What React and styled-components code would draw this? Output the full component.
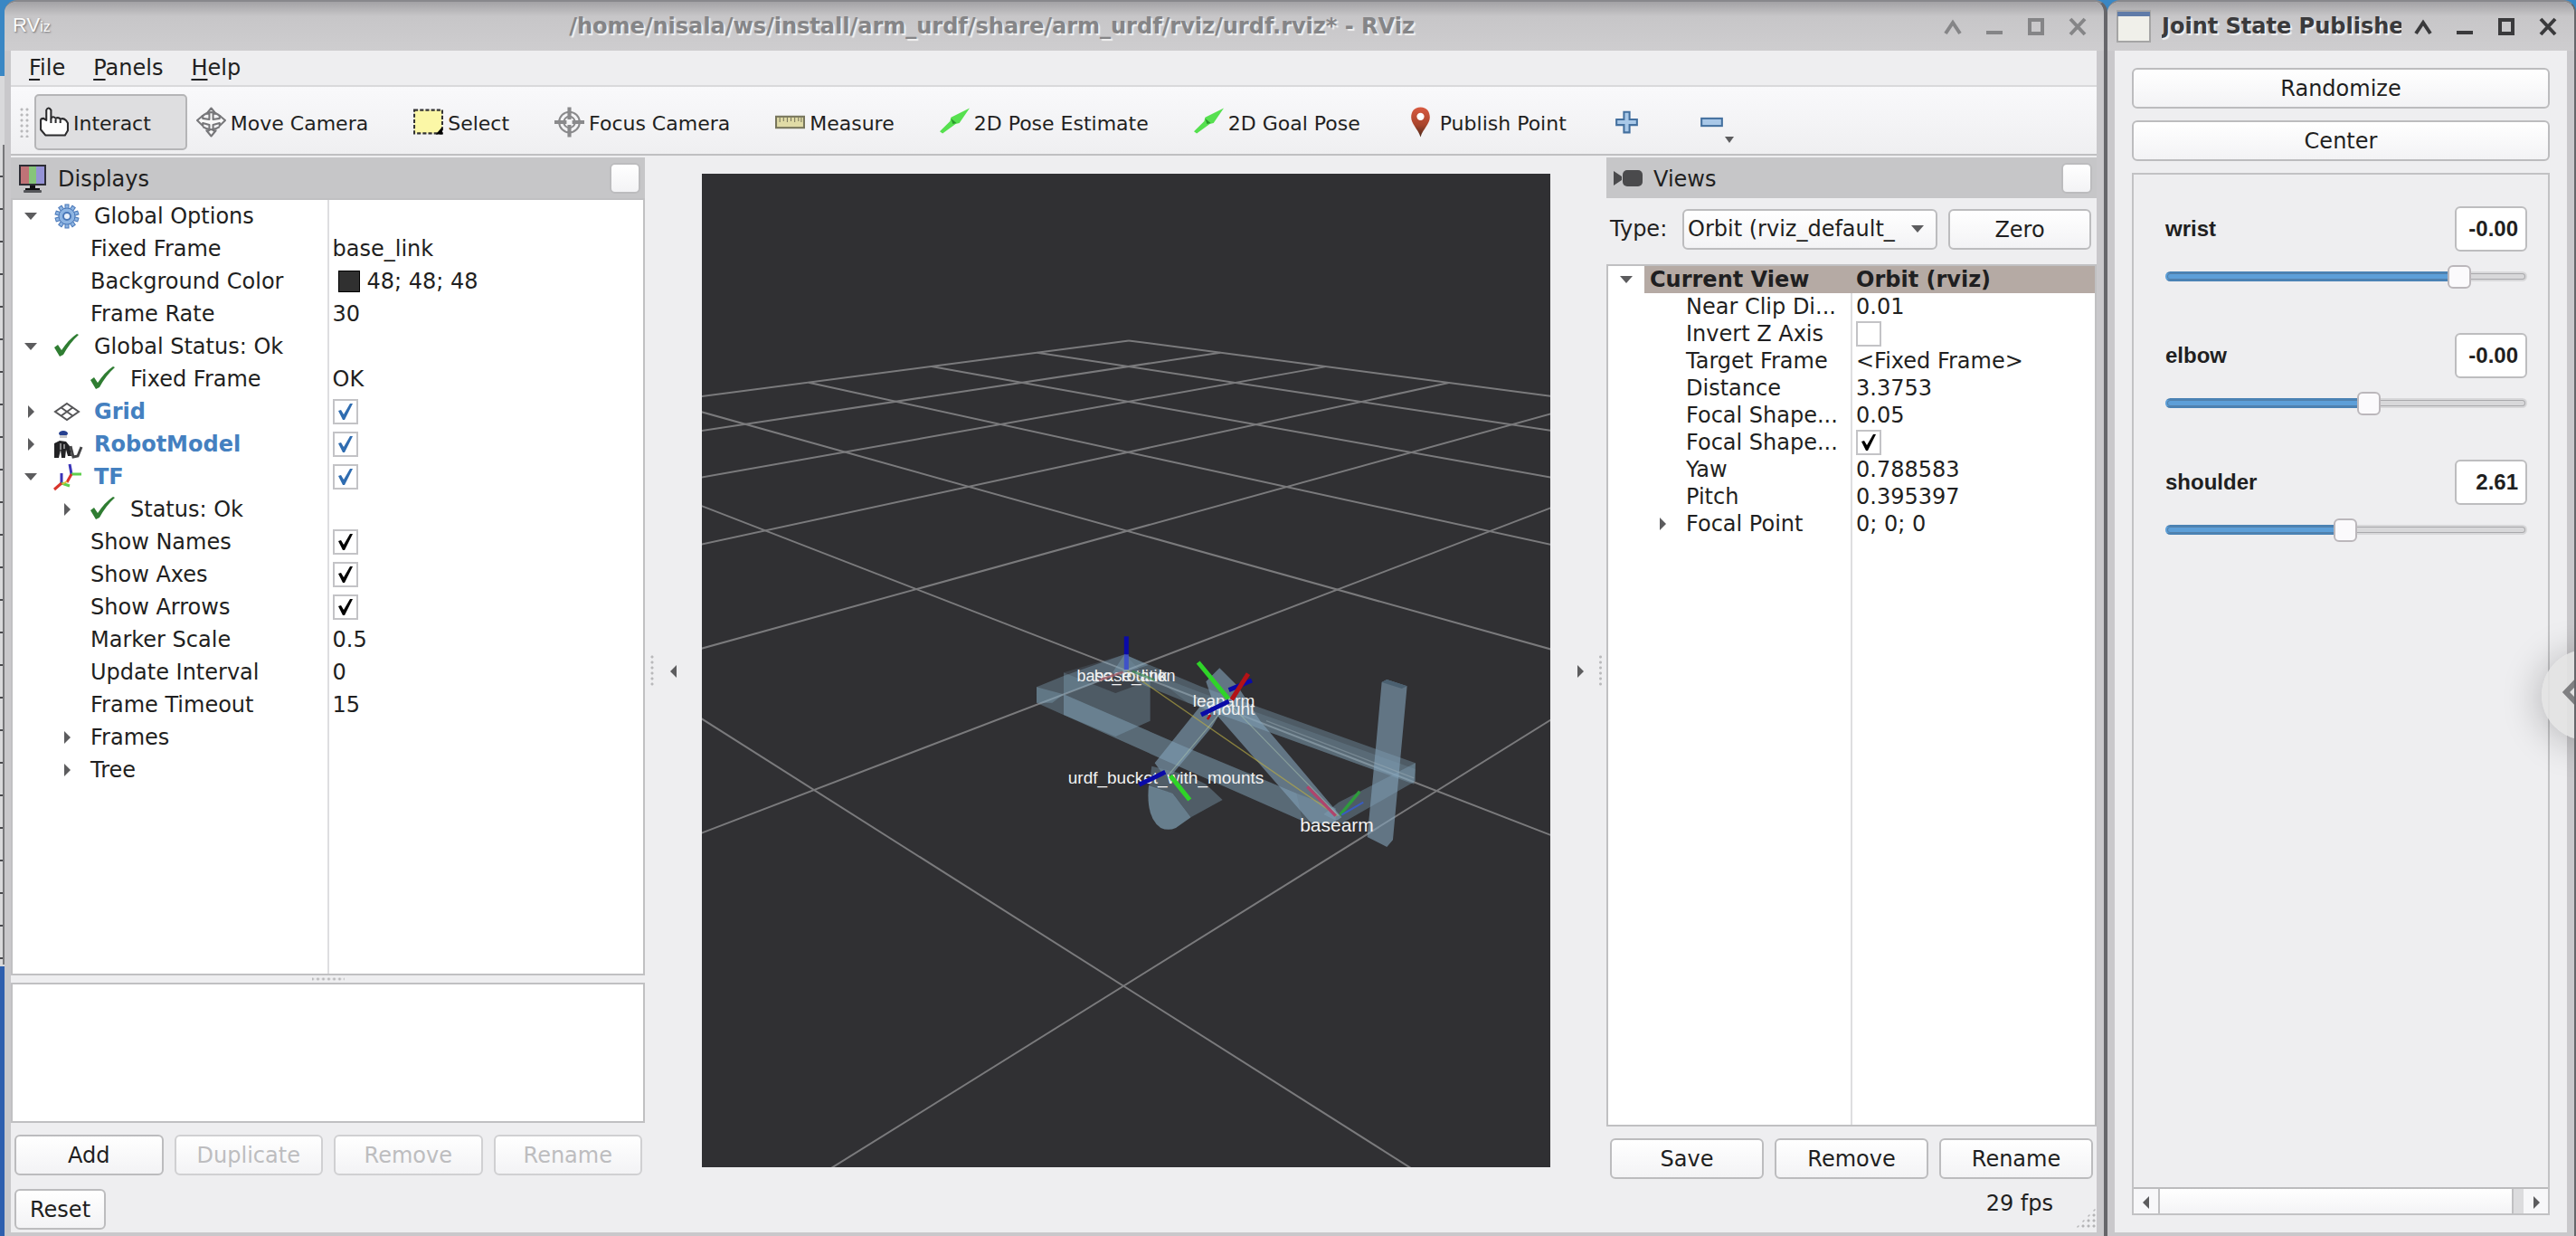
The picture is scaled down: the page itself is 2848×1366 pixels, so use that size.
import { useState } from "react";
import styled, { createGlobalStyle, css } from "styled-components";

const GlobalStyle = createGlobalStyle`
  * {
    box-sizing: border-box;
  }
  body {
    margin: 0;
    font-family: "DejaVu Sans", sans-serif;
    font-size: 24px;
    color: #1f1f21;
    background: #3a87c4;
  }
  button, input, select {
    font: inherit;
    color: inherit;
    margin: 0;
  }
`;

const Desktop = styled.div`
  display: flex;
  height: 100vh;
  overflow: hidden;
  background: linear-gradient(#3a87c4 0 84px, #d9d9db 84px 1068px, #2f5fae 1068px);
`;

const DesktopEdge = styled.div`
  width: 5px;
  margin-top: 160px;
  margin-bottom: 300px;
  border-right: 2px solid #77777a;
  background: repeating-linear-gradient(transparent 0 34px, #4a4a4e 34px 36px);
`;

const Window = styled.div`
  position: relative;
  display: flex;
  flex-direction: column;
  overflow: hidden;
  min-width: 0;
  border-radius: 14px 14px 0 0;
  background: #cbcbcd;
  border-top: 2px solid #88888c;
  border-right: ${(p) => p.$edge}px solid #66666a;
  ${(p) => (p.$width ? `flex: 0 0 ${p.$width}px;` : "flex: 1;")}
`;

const TitleBar = styled.header`
  display: flex;
  align-items: center;
  gap: 12px;
  height: 54px;
  flex: none;
  padding: 0 17px 0 ${(p) => p.$left}px;
  background: linear-gradient(#a3a2a5, #c7c6c8 16px, #cecdcf);
  color: ${(p) => (p.$active ? "#3a3a3c" : "#858587")};
  > svg {
    flex: none;
  }
`;

const WindowTitle = styled.h1`
  flex: 1;
  min-width: 0;
  margin: 0;
  padding-right: 10px;
  overflow: hidden;
  white-space: nowrap;
  font-size: 24px;
  line-height: 36px;
  font-weight: bold;
  text-align: ${(p) => p.$align};
  text-shadow: 2px 2px 1px #f2f2f2;
`;

const WindowButtons = styled.div`
  display: flex;
  gap: 22px;
`;

const WindowButton = styled.button`
  width: 24px;
  height: 24px;
  padding: 0;
  border: 0;
  background: none;
  svg {
    display: block;
  }
`;

const Logo = styled.span`
  width: 42px;
  white-space: nowrap;
  font: 22px/24px "Liberation Sans", sans-serif;
  color: #fafafa;
  text-shadow: 1px 1px 2px #6d6d70;
  small {
    font-size: 16px;
  }
`;

const WindowBody = styled.main`
  flex: 1;
  display: flex;
  flex-direction: column;
  min-height: 0;
  background: #eeeef0;
  border: solid #c9c8cb;
  border-width: 0 8px 4px ${(p) => p.$left}px;
`;

const MenuBar = styled.nav`
  display: flex;
  flex: none;
  gap: 31px;
  height: 40px;
  padding-left: 20px;
  border-bottom: 2px solid #d9d9db;
`;

const MenuItem = styled.button`
  padding: 0;
  border: 0;
  background: none;
  line-height: 38px;
  u {
    text-underline-offset: 4px;
  }
`;

const Toolbar = styled.div`
  display: flex;
  flex: none;
  align-items: center;
  gap: 5px;
  height: 76px;
  padding: 3px 0 0 9px;
  font-size: 22px;
  background: linear-gradient(#f9f9fb, #efeff1);
  border-bottom: 2px solid #bfbfc1;
`;

const ToolbarGrip = styled.span`
  width: 12px;
  height: 34px;
  background: radial-gradient(circle, #b9b9bb 1px, transparent 2px) 0 0 / 6px 6px;
`;

const ToolButton = styled.button`
  position: relative;
  display: flex;
  align-items: center;
  gap: 5px;
  height: 62px;
  padding: 0 ${(p) => (p.$iconOnly ? 49 : 38)}px 0 3px;
  border: 2px solid ${(p) => (p.$pressed ? "#b5b5b7" : "transparent")};
  border-radius: 5px;
  background: ${(p) => (p.$pressed ? "#dedee0" : "none")};
  white-space: nowrap;
  line-height: 32px;
`;

const ToolText = styled.span`
  padding-top: 4px;
`;

const DropMark = styled.svg`
  position: absolute;
  left: 33px;
  bottom: 4px;
`;

const Workspace = styled.div`
  flex: 1;
  display: flex;
  min-height: 0;
  padding-top: 2px;
`;

const Dock = styled.section`
  flex: 0 0 ${(p) => p.$width}px;
  display: flex;
  flex-direction: column;
  min-height: 0;
`;

const DockHeader = styled.h2`
  display: flex;
  flex: none;
  align-items: center;
  gap: 12px;
  height: 45px;
  margin: 0;
  padding: 0 5px 0 8px;
  font-size: 24px;
  font-weight: normal;
  background: #c6c6c8;
  span {
    flex: 1;
    padding-top: 2px;
  }
`;

const raised = css`
  border: 2px solid #bcbcbe;
  border-radius: 6px;
  background: linear-gradient(#ffffff, #f3f3f5);
`;

const FloatButton = styled.button`
  ${raised}
  width: 34px;
  height: 34px;
`;

const PushButton = styled.button`
  ${raised}
  height: 45px;
  padding: 1px 15px 0;
  flex: ${(p) => (p.$fit ? "none" : "1 1 0")};
  line-height: 36px;
  &:disabled {
    color: #bdbdbf;
    border-color: #d0d0d2;
  }
`;

const ButtonRow = styled.div`
  display: flex;
  flex: none;
  gap: 12px;
  padding: ${(p) => p.$padding};
`;

const TreeFrame = styled.div`
  flex: 1;
  min-height: 0;
  overflow: hidden;
  border: 2px solid #c0c0c2;
  background: linear-gradient(#dedee0, #dedee0) 50% 0 / 2px 100% no-repeat #ffffff;
`;

const Tree = styled.table`
  width: 100%;
  table-layout: fixed;
  border-collapse: collapse;
  td {
    padding: 0;
  }
`;

const NameCell = styled.div`
  display: flex;
  align-items: center;
  height: ${(p) => p.$height}px;
  padding-left: ${(p) => p.$level * 40}px;
  white-space: nowrap;
`;

const Expander = styled.span`
  display: flex;
  flex: none;
  justify-content: center;
  width: 40px;
`;

const Label = styled.span`
  display: flex;
  flex: 1;
  align-items: center;
  gap: 16px;
  height: 100%;
  padding-left: 6px;
  font-weight: ${(p) => (p.$bold ? "bold" : "normal")};
  color: ${(p) => (p.$blue ? "#4480c0" : "inherit")};
  background: ${(p) => (p.$selected ? "#b5aaa4" : "none")};
`;

const ValueCell = styled.div`
  display: flex;
  align-items: center;
  gap: 8px;
  height: ${(p) => p.$height}px;
  padding-left: 5px;
  white-space: nowrap;
  font-weight: ${(p) => (p.$selected ? "bold" : "normal")};
  background: ${(p) => (p.$selected ? "#b5aaa4" : "none")};
`;

const Swatch = styled.span`
  width: 24px;
  height: 24px;
  margin-left: 6px;
  border: 1px solid #000000;
  background: rgb(48, 48, 48);
`;

const CheckWrap = styled.span`
  position: relative;
  width: 28px;
  height: 28px;
  input {
    display: block;
    appearance: none;
    width: 28px;
    height: 28px;
    border: 2px solid #c3c3c6;
    background: #ffffff;
  }
  svg {
    position: absolute;
    inset: 0;
    pointer-events: none;
  }
`;

const HSplitter = styled.div`
  flex: none;
  height: 8px;
  background: radial-gradient(circle, #b9b9bb 1px, transparent 2px) 0 0 / 6px 8px;
  background-clip: content-box;
  padding: 0 calc(50% - 18px);
`;

const VSplitter = styled.div`
  flex: 0 0 ${(p) => p.$width}px;
  align-self: center;
  height: 36px;
  background: radial-gradient(circle, #b9b9bb 1px, transparent 2px) 0 0 / 100% 6px;
`;

const CollapseButton = styled.button`
  flex: 0 0 32px;
  padding: 0;
  border: 0;
  background: none;
`;

const DescriptionBox = styled.div`
  flex: none;
  height: 155px;
  border: 2px solid #c0c0c2;
  background: #ffffff;
`;

const RenderPanel = styled.div`
  flex: 1;
  display: flex;
  min-width: 0;
  padding: 18px 17px 18px 15px;
`;

const Scene = styled.svg`
  flex: 1;
  min-width: 0;
  height: 100%;
  background: #303033;
`;

const TypeRow = styled.div`
  display: flex;
  flex: none;
  align-items: center;
  height: 73px;
  padding: 0 6px 5px 4px;
  label {
    width: 80px;
  }
`;

const SelectWrap = styled.span`
  position: relative;
  flex: 1;
  margin-right: 12px;
  select {
    ${raised}
    display: block;
    appearance: none;
    width: 100%;
    height: 45px;
    padding: 0 4px;
  }
  svg {
    position: absolute;
    right: 15px;
    top: 15px;
    pointer-events: none;
  }
`;

const ZeroSlot = styled.div`
  display: flex;
  width: 158px;
`;

const StatusBar = styled.footer`
  display: flex;
  flex: none;
  justify-content: space-between;
  height: 54px;
  padding: 6px 0 4px 4px;
`;

const FrameRate = styled.div`
  display: flex;
  gap: 24px;
  line-height: 32px;
`;

const SizeGrip = styled.span`
  align-self: flex-end;
  width: 24px;
  height: 24px;
  clip-path: polygon(100% 0, 100% 100%, 0 100%);
  background: radial-gradient(circle, #b4b4b6 1px, transparent 2px) 0 0 / 6px 6px;
`;

const JointBody = styled.div`
  flex: 1;
  display: flex;
  flex-direction: column;
  gap: 13px;
  min-height: 0;
  padding: 19px;
`;

const WideButton = styled.button`
  ${raised}
  flex: none;
  height: 45px;
  padding: 1px 0 0;
`;

const JointFrame = styled.div`
  flex: 1;
  display: flex;
  flex-direction: column;
  min-height: 0;
  border: 2px solid #c2c2c4;
`;

const JointList = styled.div`
  flex: 1;
  display: flex;
  flex-direction: column;
  gap: 50px;
  padding: 35px 23px 0 35px;
`;

const Joint = styled.div`
  display: flex;
  flex-wrap: wrap;
  align-items: center;
  justify-content: space-between;
  row-gap: 14px;
  font: bold 24px/32px "Liberation Sans", Arial, sans-serif;
`;

const JointValue = styled.input`
  width: 80px;
  height: 50px;
  padding: 0 8px 0 0;
  border: 2px solid #bdbdbf;
  border-radius: 6px;
  background: #ffffff;
  text-align: right;
`;

const Slider = styled.input`
  appearance: none;
  width: 100%;
  height: 26px;
  padding: 0;
  background: none;
  &::-webkit-slider-runnable-track {
    height: 11px;
    border: 2px solid;
    border-color: #aeaeb1 #b7b7b9 #b7b7b9 #4d7fae;
    border-radius: 6px;
    background:
      linear-gradient(90deg, #4a82b4 var(--fill), transparent var(--fill)) 0 0 / 100% 2px no-repeat border-box,
      linear-gradient(90deg, #4a82b4 var(--fill), transparent var(--fill)) 0 100% / 100% 2px no-repeat border-box,
      linear-gradient(90deg, #5d9fd8 var(--fill), #d8d8da var(--fill)) border-box;
    border-color: transparent;
    box-shadow: inset 0 0 0 1px rgba(60, 60, 66, 0.3);
  }
  &::-webkit-slider-thumb {
    appearance: none;
    width: 26px;
    height: 26px;
    margin-top: -9px;
    border: 2px solid #bbb7bb;
    border-radius: 6px;
    background: #fbfafc;
  }
`;

const ScrollBar = styled.div`
  display: flex;
  flex: none;
  height: 29px;
  border-top: 2px solid #bcbcbe;
  background: #dcdcde;
`;

const ScrollArrow = styled.button`
  width: 27px;
  padding: 0;
  border: 0;
  background: #f7f7f9;
`;

const ScrollThumb = styled.span`
  flex: 1;
  margin-right: 11px;
  border: solid #c0c0c2;
  border-width: 0 2px;
  background: linear-gradient(#ffffff, #f4f4f6);
`;

// drawer tab that hangs over the right screen edge
const EdgeHandle = styled.button`
  position: absolute;
  top: calc(50vh + 33px);
  right: -64px;
  width: 100px;
  height: 100px;
  padding: 0 0 0 21px;
  border: 0;
  border-radius: 50%;
  text-align: left;
  background: rgba(226, 226, 226, 0.9);
  box-shadow: -4px 4px 40px rgba(0, 0, 0, 0.22);
`;

/* ---------- icons ---------- */

function ControlIcon({ kind }) {
  const shapes = {
    shade: "M4 20 L12 8 L20 20",
    min: "M3 19 H21",
    max: "M5 5 H19 V20 H5 Z",
    close: "M4 4 L20 21 M20 4 L4 21",
  };
  return (
    <svg width="24" height="24" fill="none" stroke="currentColor" strokeWidth="4">
      <path d={shapes[kind]} />
    </svg>
  );
}

function Triangle({ dir = "down", color = "#5c5c5e" }) {
  const points = {
    down: "0,3 14,3 7,11",
    right: "4,0 11,7 4,14",
    left: "10,0 3,7 10,14",
  };
  return (
    <svg width="14" height="14">
      <polygon points={points[dir]} fill={color} />
    </svg>
  );
}

const toolIcons = {
  interact: (
    <g fill="#fdfdfd" stroke="#2b2b2d" strokeWidth="2" strokeLinejoin="round">
      <path d="M7 30 L2 24 V14 Q2 12 5 12 L8 14 V3 Q10 -1 13 3 V12 Q15 9 18 12 Q21 10 23 13 Q26 11 29 14 L31 17 V25 L28 30 Z" />
      <path d="M13 12 V17 M18 13 V17 M23 14 V17" />
    </g>
  ),
  move: (
    <g fill="#f9f9f9" stroke="#77777a" strokeWidth="2" strokeLinejoin="round">
      <path d="M16 1 L21 7 H18 V13 L25 12 V9 L31 14 L25 20 V17 L18 19 V25 H21 L16 31 L11 25 H14 V19 L7 17 V20 L1 14 L7 9 V12 L14 13 V7 H11 Z" />
      <path d="M6 10 Q16 1 26 10 M7 21 Q16 27 25 21" fill="none" />
    </g>
  ),
  select: (
    <g>
      <rect x="1" y="3" width="30" height="25" fill="#fbf7a6" stroke="#333335" strokeWidth="2" strokeDasharray="4 2" />
      <path d="M31 21 V29 H24 Z" fill="#000000" />
    </g>
  ),
  focus: (
    <g fill="none" stroke="#8a8a8c" strokeWidth="2">
      <circle cx="16" cy="16" r="11" />
      <circle cx="16" cy="16" r="6" />
      <path d="M15 0 V13 M17 0 V13 M15 19 V32 M17 19 V32 M0 15 H13 M0 17 H13 M19 15 H32 M19 17 H32" />
    </g>
  ),
  measure: (
    <g>
      <rect x="1" y="10" width="30" height="12" fill="#e0dba6" stroke="#77755c" strokeWidth="2" />
      <path d="M5 11 V16 M9 11 V15 M13 11 V16 M17 11 V15 M21 11 V16 M25 11 V15 M28 11 V16" stroke="#77755c" strokeWidth="1" />
    </g>
  ),
  arrow: (
    <g>
      <path d="M0 26 L11 15 L12 11 L32 1 L21 17 L17 18 L3 28 Z" fill="#56e04f" />
      <path d="M12 12 L18 17 L14 18 Z" fill="#2a9a2c" />
    </g>
  ),
  pin: (
    <g>
      <path d="M16 0 C9 0 6 5 6 11 C6 18 13 23 16 32 C19 23 26 18 26 11 C26 5 23 0 16 0 Z" fill="url(#pinFill)" />
      <circle cx="16" cy="10" r="4" fill="#ffffff" />
    </g>
  ),
  plus: (
    <path d="M13 5 H19 V13 H27 V19 H19 V27 H13 V19 H5 V13 H13 Z" fill="#a9c8e8" stroke="#44709f" strokeWidth="2" />
  ),
  minus: <rect x="5" y="12" width="22" height="8" fill="#a9c8e8" stroke="#44709f" strokeWidth="2" />,
};

function ToolIcon({ name }) {
  return (
    <svg width="33" height="34" viewBox="0 0 32 32">
      <defs>
        <linearGradient id="pinFill" x1="0" y1="0" x2="0" y2="1">
          <stop offset="0" stopColor="#d85a41" />
          <stop offset="0.6" stopColor="#a8452c" />
          <stop offset="1" stopColor="#4c2a1a" />
        </linearGradient>
      </defs>
      {toolIcons[name]}
    </svg>
  );
}

const gearTeeth = Array.from({ length: 10 }, (_, i) => i * 36);

const treeIcons = {
  gear: (
    <g stroke="#4a78b8" fill="#8db4e2">
      {gearTeeth.map((a) => (
        <rect key={a} x="12" y="1" width="4" height="6" strokeWidth="1" transform={`rotate(${a} 14 14)`} />
      ))}
      <circle cx="14" cy="14" r="9" strokeWidth="1" />
      <circle cx="14" cy="14" r="4" fill="#e8f0fa" strokeWidth="2" />
    </g>
  ),
  ok: <path d="M0 15 L4 12 L8 18 Q16 6 25 0 L27 1 Q17 10 10 23 L6 25 Z" fill="#2f7d32" />,
  grid: (
    <g fill="none" stroke="#555557" strokeWidth="2">
      <path d="M14 5 L27 14 L14 23 L1 14 Z M7 9 L21 19 M21 9 L7 19" />
    </g>
  ),
  robot: (
    <g>
      <ellipse cx="10" cy="2" rx="5" ry="3" fill="#26408f" />
      <path d="M6 4 H14 V7 H6 Z" fill="#c9c9cb" />
      <path d="M0 13 L6 10 L13 11 L17 16 L19 27 H15 L13 20 L12 29 H8 L7 20 L5 29 H0 Z" fill="#222224" />
      <path d="M18 16 L21 28 L26 27 L30 17" fill="none" stroke="#444446" strokeWidth="3" />
      <path d="M7 13 V20 M11 14 V19" stroke="#eeeeee" strokeWidth="1" />
    </g>
  ),
  tf: (
    <g fill="none" strokeWidth="2">
      <path d="M17 0 L19 11 M8 10 V21" stroke="#3a34b8" strokeWidth="3" />
      <path d="M19 11 H30 M8 21 L17 24" stroke="#5fd04e" strokeWidth="3" />
      <path d="M19 11 L14 20 M8 21 L0 28" stroke="#d8352c" strokeWidth="3" />
      <path d="M14 19 L9 22" stroke="#e0b93a" />
    </g>
  ),
};

function TreeIcon({ name }) {
  return (
    <svg width="28" height="28" viewBox="0 0 28 28" overflow="visible">
      {treeIcons[name]}
    </svg>
  );
}

function MonitorIcon() {
  return (
    <svg width="32" height="34">
      <rect x="1" y="2" width="30" height="23" fill="#2d2d35" />
      <rect x="3" y="4" width="9" height="19" fill="#bf7377" />
      <rect x="12" y="4" width="8" height="19" fill="#86c47a" />
      <rect x="20" y="4" width="9" height="19" fill="#9593d6" />
      <path d="M13 25 H19 V28 H24 V30 H8 V28 H13 Z" fill="#111113" />
      <rect x="6" y="30" width="20" height="3" rx="1" fill="#55565a" />
    </svg>
  );
}

function CameraIcon() {
  return (
    <svg width="32" height="18">
      <path d="M0 1 L9 7 V11 L0 17 Z" fill="#4a4a4c" />
      <rect x="10" y="0" width="22" height="18" rx="5" fill="#4a4a4c" />
    </svg>
  );
}

function WindowIcon() {
  return (
    <svg width="38" height="36">
      <rect x="1" y="1" width="36" height="34" fill="#f0f0ea" stroke="#a5a5a5" strokeWidth="2" />
      <rect x="1" y="2" width="36" height="5" fill="#5f7ba8" />
    </svg>
  );
}

/* ---------- 3D view ---------- */

const VIEW = { yaw: 0.788583, pitch: 0.395397, distance: 3.3753, width: 938, height: 1098 };

function toCamera(x, y) {
  const outward = x * Math.cos(VIEW.yaw) + y * Math.sin(VIEW.yaw);
  const side = y * Math.cos(VIEW.yaw) - x * Math.sin(VIEW.yaw);
  const c = Math.cos(VIEW.pitch);
  const s = Math.sin(VIEW.pitch);
  return { side, up: -s * outward, depth: VIEW.distance - c * outward };
}

function project(p) {
  const focal = VIEW.height / 2 / Math.tan(Math.PI / 8);
  return [VIEW.width / 2 + (p.side / p.depth) * focal, VIEW.height / 2 - (p.up / p.depth) * focal];
}

// cut the part of a grid line that is behind the camera
function gridLine(x1, y1, x2, y2) {
  const near = 0.3;
  const a = toCamera(x1, y1);
  let b = toCamera(x2, y2);
  if (b.depth < near) {
    const t = (a.depth - near) / (a.depth - b.depth);
    b = { side: a.side + (b.side - a.side) * t, up: a.up + (b.up - a.up) * t, depth: near };
  }
  return [...project(a), ...project(b)];
}

const gridLines = [];
for (let i = -5; i <= 5; i++) {
  gridLines.push(gridLine(i, -5, i, 5));
  gridLines.push(gridLine(-5, i, 5, i));
}

function RobotScene() {
  return (
    <Scene viewBox="0 0 938 1098" preserveAspectRatio="xMidYMid slice">
      <g stroke="#9a9a9c" strokeWidth="2" opacity="0.7">
        {gridLines.map(([x1, y1, x2, y2], i) => (
          <line key={i} x1={x1} y1={y1} x2={x2} y2={y2} />
        ))}
      </g>
      <g transform="translate(324 488) scale(0.3333)">
        <g fill="#86a9c0" fillOpacity="0.36">
          <path d="M138 238 L228 262 L640 440 L1000 590 L1130 640 L1130 690 L1020 682 L540 470 L138 290 Z" />
          <path d="M138 238 L230 200 L430 130 L510 165 L430 190 L228 262 L190 290 L138 290 Z" />
          <path d="M430 130 L680 235 L1395 490 L1390 560 L1250 510 L640 290 L390 190 Z" />
          <path d="M228 262 L640 440 L1000 590 L1020 682 L540 470 L228 330 Z" fillOpacity="0.2" />
          <path d="M510 190 L680 255 L1395 510 L1390 550 L1250 510 L640 290 Z" fillOpacity="0.2" />
          <path d="M228 190 L400 258 L515 215 L515 350 L400 402 L228 330 Z" />
          <path d="M228 190 L430 130 L515 215 L400 258 Z" fillOpacity="0.15" />
          <path d="M1395 490 L1395 550 L1150 690 L1090 660 L1140 620 Z" />
        </g>
        <g fill="#83a4ba" fillOpacity="0.6">
          <path d="M700 220 L745 175 L805 235 L880 350 L1150 670 L1120 690 L1050 690 L740 335 Z" />
          <path d="M690 290 L770 285 L720 370 L590 525 L560 530 L530 490 Z" />
          <path d="M1283 222 L1300 213 L1367 235 L1320 745 L1300 768 L1235 735 L1265 420 Z" />
        </g>
        <path d="M510 565 L590 590 L650 670 L600 705 Q575 716 550 705 Q500 670 510 565 Z" fill="#7f9fb4" fillOpacity="0.7" />
        <path d="M520 500 L640 530 L700 560 L755 612 L650 670 L590 590 L510 570 Z" fill="#6f8a9c" fillOpacity="0.5" />
        <path d="M1283 222 L1300 213 L1367 235 L1350 243 Z" fill="#4b6070" />
        <path d="M440 185 L1135 665" stroke="#b8ab45" strokeWidth="4" opacity="0.65" />
        <path d="M575 530 L775 290 L1140 665" fill="none" stroke="#a9c4ae" strokeWidth="4" opacity="0.5" />
        <path d="M900 350 L1390 540" stroke="#a3b3bb" strokeWidth="4" opacity="0.4" />
      </g>
      <g fill="#f2f2f2" fontFamily="Liberation Sans, Arial, sans-serif" fontSize="19" textAnchor="middle">
        <text x="469" y="561" fontSize="18">base_rotation</text>
        <text x="474" y="561">base_link</text>
        <text x="585" y="598">mount</text>
        <text x="577" y="589">leaparm</text>
        <text x="513" y="674">urdf_bucket_with_mounts</text>
        <text x="702" y="727" fontSize="21">basearm</text>
      </g>
      <g transform="translate(324 488) scale(0.3333)" strokeWidth="15" fill="none">
        <path d="M436 70 V130" stroke="#0a0aa8" />
        <path d="M436 130 V180" stroke="#3f52c8" />
        <path d="M455 185 L530 215" stroke="#3c8a52" strokeWidth="8" opacity="0.7" />
        <path d="M425 188 L345 215" stroke="#8f3f4c" strokeWidth="8" opacity="0.7" />
        <path d="M776 248 L852 216" stroke="#0a0aa8" />
        <path d="M674 156 L775 278" stroke="#2fd428" />
        <path d="M840 194 L785 280" stroke="#b31217" />
        <path d="M684 330 L776 285" stroke="#0a0aa8" />
        <path d="M715 330 L705 345" stroke="#b31217" strokeWidth="8" />
        <path d="M478 562 L565 520" stroke="#0a0aa8" />
        <path d="M582 532 L646 612" stroke="#2fd428" />
        <path d="M1036 568 L1130 665" stroke="#b0446c" strokeWidth="10" />
        <path d="M1145 662 L1210 584" stroke="#2f9c3c" strokeWidth="10" />
        <path d="M1150 662 L1222 620" stroke="#3a5cc0" strokeWidth="6" />
      </g>
    </Scene>
  );
}

/* ---------- data ---------- */

const tools = [
  { icon: "interact", text: "Interact", pressed: true },
  { icon: "move", text: "Move Camera" },
  { icon: "select", text: "Select" },
  { icon: "focus", text: "Focus Camera" },
  { icon: "measure", text: "Measure" },
  { icon: "arrow", text: "2D Pose Estimate" },
  { icon: "arrow", text: "2D Goal Pose" },
  { icon: "pin", text: "Publish Point" },
];

const displayRows = [
  { name: "Global Options", level: 0, open: true, icon: "gear" },
  { name: "Fixed Frame", level: 1, value: "base_link" },
  { name: "Background Color", level: 1, value: "48; 48; 48", swatch: true },
  { name: "Frame Rate", level: 1, value: "30" },
  { name: "Global Status: Ok", level: 0, open: true, icon: "ok" },
  { name: "Fixed Frame", level: 1, icon: "ok", value: "OK" },
  { name: "Grid", level: 0, open: false, icon: "grid", blue: true, checked: true },
  { name: "RobotModel", level: 0, open: false, icon: "robot", blue: true, checked: true },
  { name: "TF", level: 0, open: true, icon: "tf", blue: true, checked: true },
  { name: "Status: Ok", level: 1, open: false, icon: "ok" },
  { name: "Show Names", level: 1, checked: true },
  { name: "Show Axes", level: 1, checked: true },
  { name: "Show Arrows", level: 1, checked: true },
  { name: "Marker Scale", level: 1, value: "0.5" },
  { name: "Update Interval", level: 1, value: "0" },
  { name: "Frame Timeout", level: 1, value: "15" },
  { name: "Frames", level: 1, open: false },
  { name: "Tree", level: 1, open: false },
];

const viewRows = [
  { name: "Current View", level: 0, open: true, value: "Orbit (rviz)", selected: true },
  { name: "Near Clip Di...", level: 1, value: "0.01" },
  { name: "Invert Z Axis", level: 1, checked: false },
  { name: "Target Frame", level: 1, value: "<Fixed Frame>" },
  { name: "Distance", level: 1, value: "3.3753" },
  { name: "Focal Shape...", level: 1, value: "0.05" },
  { name: "Focal Shape...", level: 1, checked: true },
  { name: "Yaw", level: 1, value: "0.788583" },
  { name: "Pitch", level: 1, value: "0.395397" },
  { name: "Focal Point", level: 1, open: false, value: "0; 0; 0" },
];

const initialJoints = [
  { name: "wrist", value: "-0.00", position: 838 },
  { name: "elbow", value: "-0.00", position: 568 },
  { name: "shoulder", value: "2.61", position: 497 },
];

/* ---------- parts ---------- */

function Check({ label, initial, blue }) {
  const [checked, setChecked] = useState(initial);
  return (
    <CheckWrap>
      <input type="checkbox" aria-label={label} checked={checked} onChange={() => setChecked(!checked)} />
      {checked && (
        <svg width="28" height="28">
          <path d="M6 13 L9 12 L12 17 L19 5 L22 5 L13 23 L11 23 Z" fill={blue ? "#2f6cb0" : "#000000"} />
        </svg>
      )}
    </CheckWrap>
  );
}

function PropertyTree({ rows, rowHeight }) {
  return (
    <TreeFrame>
      <Tree>
        <tbody>
          {rows.map((row, i) => (
            <tr key={i}>
              <td>
                <NameCell $height={rowHeight} $level={row.level}>
                  <Expander>
                    {row.open !== undefined && <Triangle dir={row.open ? "down" : "right"} />}
                  </Expander>
                  <Label $blue={row.blue} $bold={row.blue || row.selected} $selected={row.selected}>
                    {row.icon && <TreeIcon name={row.icon} />}
                    {row.name}
                  </Label>
                </NameCell>
              </td>
              <td>
                <ValueCell $height={rowHeight} $selected={row.selected}>
                  {row.swatch && <Swatch />}
                  {row.checked !== undefined && <Check label={row.name} initial={row.checked} blue={row.blue} />}
                  {row.value}
                </ValueCell>
              </td>
            </tr>
          ))}
        </tbody>
      </Tree>
    </TreeFrame>
  );
}

function Controls() {
  return (
    <WindowButtons>
      {["shade", "min", "max", "close"].map((kind) => (
        <WindowButton key={kind} aria-label={kind}>
          <ControlIcon kind={kind} />
        </WindowButton>
      ))}
    </WindowButtons>
  );
}

function JointRow({ joint, onChange }) {
  return (
    <Joint>
      <label htmlFor={joint.name}>{joint.name}</label>
      <JointValue aria-label={`${joint.name} value`} value={joint.value} readOnly />
      <Slider
        id={joint.name}
        type="range"
        min="0"
        max="1000"
        value={joint.position}
        onChange={(e) => onChange(Number(e.target.value))}
        style={{ "--fill": `${joint.position / 10}%` }}
      />
    </Joint>
  );
}

function App() {
  const [joints, setJoints] = useState(initialJoints);

  const moveJoint = (index, position) => {
    setJoints(joints.map((j, i) => (i === index ? { ...j, position } : j)));
  };

  return (
    <Desktop>
      <GlobalStyle />
      <DesktopEdge />
      <Window $edge={4}>
        <TitleBar $left={9}>
          <Logo>
            RV<small>iz</small>
          </Logo>
          <WindowTitle $align="center">
            /home/nisala/ws/install/arm_urdf/share/arm_urdf/rviz/urdf.rviz* - RViz
          </WindowTitle>
          <Controls />
        </TitleBar>
        <WindowBody $left={7}>
          <MenuBar>
            <MenuItem><u>F</u>ile</MenuItem>
            <MenuItem><u>P</u>anels</MenuItem>
            <MenuItem><u>H</u>elp</MenuItem>
          </MenuBar>
          <Toolbar>
            <ToolbarGrip />
            {tools.map((tool) => (
              <ToolButton key={tool.text} $pressed={tool.pressed}>
                <ToolIcon name={tool.icon} />
                <ToolText>{tool.text}</ToolText>
              </ToolButton>
            ))}
            <ToolButton $iconOnly aria-label="Add tool">
              <ToolIcon name="plus" />
            </ToolButton>
            <ToolButton $iconOnly aria-label="Remove tool">
              <ToolIcon name="minus" />
              <DropMark width="12" height="10">
                <polygon points="1,1 11,1 6,8" fill="#5c5c5e" />
              </DropMark>
            </ToolButton>
          </Toolbar>
          <Workspace>
            <Dock $width={701}>
              <DockHeader>
                <MonitorIcon />
                <span>Displays</span>
                <FloatButton aria-label="Float displays" />
              </DockHeader>
              <PropertyTree rows={displayRows} rowHeight={36} />
              <HSplitter />
              <DescriptionBox />
              <ButtonRow $padding="13px 3px 9px 4px">
                <PushButton>Add</PushButton>
                <PushButton disabled>Duplicate</PushButton>
                <PushButton disabled>Remove</PushButton>
                <PushButton disabled>Rename</PushButton>
              </ButtonRow>
            </Dock>
            <VSplitter $width={16} />
            <CollapseButton aria-label="Collapse left">
              <Triangle dir="left" />
            </CollapseButton>
            <RenderPanel>
              <RobotScene />
            </RenderPanel>
            <CollapseButton aria-label="Collapse right">
              <Triangle dir="right" />
            </CollapseButton>
            <VSplitter $width={13} />
            <Dock $width={542}>
              <DockHeader>
                <CameraIcon />
                <span>Views</span>
                <FloatButton aria-label="Float views" />
              </DockHeader>
              <TypeRow>
                <label htmlFor="view-type">Type:</label>
                <SelectWrap>
                  <select id="view-type">
                    <option>Orbit (rviz_default_</option>
                  </select>
                  <Triangle />
                </SelectWrap>
                <ZeroSlot>
                  <PushButton>Zero</PushButton>
                </ZeroSlot>
              </TypeRow>
              <PropertyTree rows={viewRows} rowHeight={30} />
              <ButtonRow $padding="13px 4px 5px 4px">
                <PushButton>Save</PushButton>
                <PushButton>Remove</PushButton>
                <PushButton>Rename</PushButton>
              </ButtonRow>
            </Dock>
          </Workspace>
          <StatusBar>
            <PushButton $fit>Reset</PushButton>
            <FrameRate>
              29 fps
              <SizeGrip />
            </FrameRate>
          </StatusBar>
        </WindowBody>
      </Window>
      <Window $width={518} $edge={2}>
        <TitleBar $left={10} $active>
          <WindowIcon />
          <WindowTitle as="h2" $align="left">
            Joint State Publisher
          </WindowTitle>
          <Controls />
        </TitleBar>
        <WindowBody $left={8}>
          <JointBody>
            <WideButton>Randomize</WideButton>
            <WideButton>Center</WideButton>
            <JointFrame>
              <JointList>
                {joints.map((joint, i) => (
                  <JointRow key={joint.name} joint={joint} onChange={(v) => moveJoint(i, v)} />
                ))}
              </JointList>
              <ScrollBar>
                <ScrollArrow aria-label="Scroll left">
                  <Triangle dir="left" />
                </ScrollArrow>
                <ScrollThumb />
                <ScrollArrow aria-label="Scroll right">
                  <Triangle dir="right" />
                </ScrollArrow>
              </ScrollBar>
            </JointFrame>
          </JointBody>
        </WindowBody>
        <EdgeHandle aria-label="Open side panel">
          <svg width="30" height="34" viewBox="0 0 30 34" fill="none" stroke="#808082" strokeWidth="6">
            <path d="M26 -4 L6 17 L26 38" />
          </svg>
        </EdgeHandle>
      </Window>
    </Desktop>
  );
}

export default App;
